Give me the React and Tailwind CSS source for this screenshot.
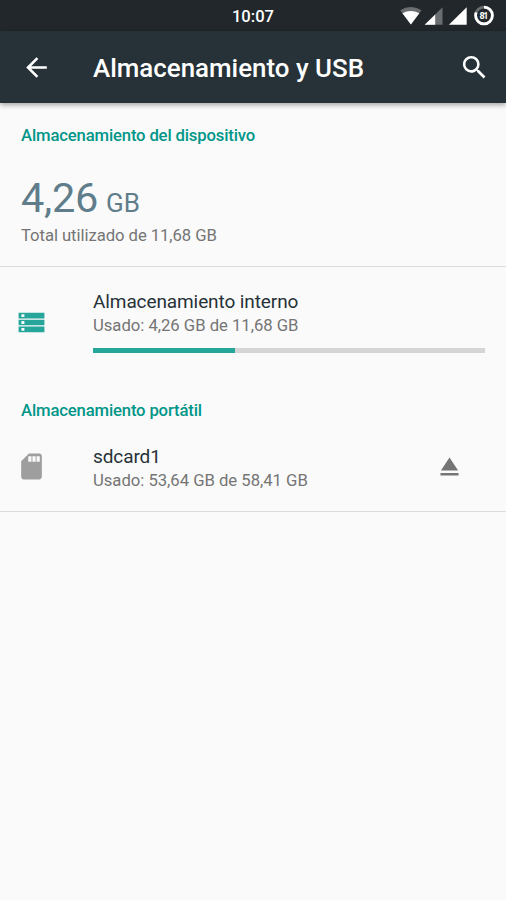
const Icon = ({ className, children }) => (
  <svg viewBox="0 0 24 24" fill="currentColor" className={`h-[31px] w-[31px] shrink-0 ${className}`}>
    {children}
  </svg>
)

const StatusBar = () => (
  <div className="relative flex h-[31px] items-center justify-center bg-[#21272b] text-white">
    <span className="pt-[2px] text-[16.6px] leading-5 font-medium">10:07</span>
    <div className="absolute inset-y-0 right-0 w-[120px]">
      <svg viewBox="0 0 120 31" className="h-[31px] w-[120px]">
        {/* Wifi */}
        <path d="M14.2 10.2Q24.7 3.6 35.5 10.2L24.9 24.6Z" fill="#6a6e71" />
        <path d="M16.4 13.2Q24.8 9 33.3 13.2L24.9 24.6Z" fill="#fff" />
        {/* Mobile signal */}
        <path d="M56.5 7.3V24.7H38.7Z" fill="#6a6e71" />
        <path d="M49.2 14.4V24.7H38.7Z" fill="#fff" />
        <path d="M80.7 7.3V24.7H62.9Z" fill="#fff" />
        {/* Battery */}
        <circle cx="98" cy="15.5" r="8.4" fill="none" stroke="#6a6e71" strokeWidth="2.8" />
        <circle
          cx="98"
          cy="15.5"
          r="8.4"
          fill="none"
          stroke="#fff"
          strokeWidth="2.8"
          pathLength="100"
          strokeDasharray="81 19"
          transform="rotate(-90 98 15.5)"
        />
        <text x="98" y="18.8" textAnchor="middle" fill="#fff" fontSize="9" fontWeight="700" textLength="9">81</text>
      </svg>
    </div>
  </div>
)

const Toolbar = () => (
  <header className="relative flex h-[72px] items-center bg-[#263238] pr-[16px] pl-[21px] text-white shadow-[0_2px_5px_rgba(0,0,0,0.35)]">
    <Icon>
      <path d="M20 11H7.83l5.59-5.59L12 4l-8 8 8 8 1.41-1.41L7.83 13H20v-2z" />
    </Icon>
    <h1 className="ml-[41px] flex-1 pt-[2px] text-[25.9px] leading-8 font-medium whitespace-nowrap">
      Almacenamiento y USB
    </h1>
    <Icon>
      <path d="M15.5 14h-.79l-.28-.27A6.471 6.471 0 0 0 16 9.5 6.5 6.5 0 1 0 9.5 16c1.61 0 3.09-.59 4.23-1.57l.27.28v.79l5 4.99L20.49 19l-4.99-5zm-6 0C7.01 14 5 11.99 5 9.5S7.01 5 9.5 5 14 7.01 14 9.5 11.99 14 9.5 14z" />
    </Icon>
  </header>
)

const SectionTitle = ({ children }) => (
  <h2 className="px-[21px] text-[16.7px] leading-5 font-medium tracking-[-0.16px] text-[#009688]">{children}</h2>
)

const VolumeText = ({ name, summary }) => (
  <>
    <p className="text-[19px] leading-6 tracking-[-0.1px] text-[#263238]">{name}</p>
    <p className="pt-px text-[16.7px] leading-[22px] tracking-[-0.03px] text-[#757575]">{summary}</p>
  </>
)

const App = () => {
  return (
    <div className="flex h-[900px] w-[506px] flex-col overflow-hidden bg-[#fafafa] font-[Roboto,sans-serif]">
      <StatusBar />
      <Toolbar />

      <main>
        {/* Device storage */}
        <section className="h-[164px] border-b border-[#dcdcdc] pt-[23px]">
          <SectionTitle>Almacenamiento del dispositivo</SectionTitle>
          <div className="px-[21px] pt-[27px]">
            <div className="flex h-[50px] items-baseline gap-[8px] leading-[50px] text-[#607d8b]">
              <span className="text-[41.5px] tracking-[-0.3px]">4,26</span>
              <span className="text-[26px]">GB</span>
            </div>
            <p className="pt-[3px] text-[16.7px] leading-5 tracking-[-0.07px] text-[#757575]">
              Total utilizado de 11,68 GB
            </p>
          </div>
        </section>

        <section className="flex h-[132px] pr-[21px] pl-[16px]">
          <Icon className="mt-[40px] text-[#26a69a]">
            <path
              d="M2 4.5h20v4.4H2zM2 9.8h20v4.4H2zM2 15.1h20v4.4H2zM4.2 5.6v2.2h2.3V5.6zM4.2 10.9v2.2h2.3v-2.2zM4.2 16.2v2.2h2.3v-2.2z"
              fillRule="evenodd"
            />
          </Icon>
          <div className="ml-[46px] flex-1 pt-[23px]">
            <VolumeText name="Almacenamiento interno" summary="Usado: 4,26 GB de 11,68 GB" />
            <div className="mt-[11px] h-[5px] bg-[#d5d5d5]">
              <div className="h-full w-[36.2%] bg-[#26a69a]" />
            </div>
          </div>
        </section>

        {/* Portable storage */}
        <section className="h-[113px] border-b border-[#dcdcdc] pt-[2px]">
          <SectionTitle>Almacenamiento portátil</SectionTitle>
          <div className="flex pr-[41px] pl-[16px]">
            <Icon className="mt-[30px] text-[#9e9e9e]">
              <path d="M18 2h-8L4.02 8 4 20c0 1.1.9 2 2 2h12c1.1 0 2-.9 2-2V4c0-1.1-.9-2-2-2zm-6 6.3H9.5V4H12v4.300zm3.200 0h-2.500V4h2.500v4.300zm3.200 0h-2.500V4h2.500v4.300z" />
            </Icon>
            <div className="ml-[46px] flex-1 pt-[24px]">
              <VolumeText name="sdcard1" summary="Usado: 53,64 GB de 58,41 GB" />
            </div>
            <Icon className="mt-[30px] text-[#757575]">
              <path d="M5 17h14v2H5zm7-12L5.33 15h13.34z" />
            </Icon>
          </div>
        </section>
      </main>
    </div>
  )
}

export default App
